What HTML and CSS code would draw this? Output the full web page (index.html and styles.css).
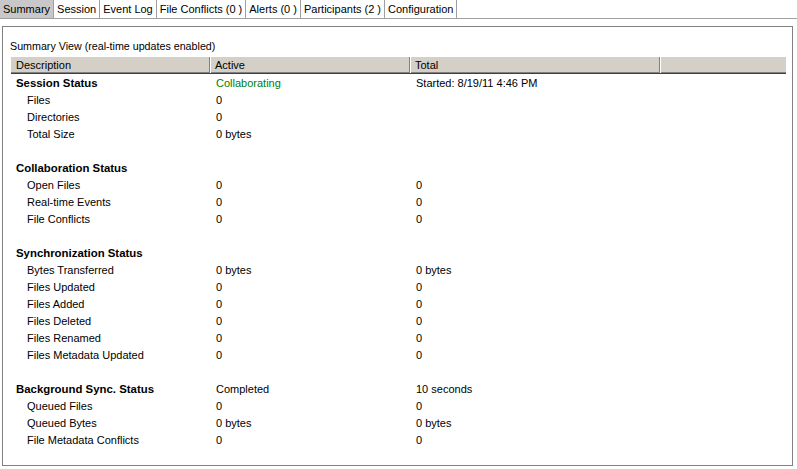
FILE: index.html
```html
<!DOCTYPE html>
<html>
<head>
<meta charset="utf-8">
<link rel="stylesheet" href="styles.css">
</head>
<body>
<div class="tabs">
  <div class="tab selected">Summary</div>
  <div class="tab">Session</div>
  <div class="tab">Event Log</div>
  <div class="tab">File Conflicts (0 )</div>
  <div class="tab">Alerts (0 )</div>
  <div class="tab">Participants (2 )</div>
  <div class="tab">Configuration</div>
</div>
<div class="panel">
  <div class="caption">Summary View (real-time updates enabled)</div>
  <div class="list">
    <div class="head">
      <div class="hcell">Description</div>
      <div class="hcell">Active</div>
      <div class="hcell">Total</div>
      <div class="hcell"></div>
    </div>
    <div class="row section"><div class="c1">Session Status</div><div class="c2 green">Collaborating</div><div class="c3">Started: 8/19/11 4:46 PM</div></div>
    <div class="row"><div class="c1">Files</div><div class="c2">0</div><div class="c3"></div></div>
    <div class="row"><div class="c1">Directories</div><div class="c2">0</div><div class="c3"></div></div>
    <div class="row"><div class="c1">Total Size</div><div class="c2">0 bytes</div><div class="c3"></div></div>
    <div class="row blank"></div>
    <div class="row section"><div class="c1">Collaboration Status</div><div class="c2"></div><div class="c3"></div></div>
    <div class="row"><div class="c1">Open Files</div><div class="c2">0</div><div class="c3">0</div></div>
    <div class="row"><div class="c1">Real-time Events</div><div class="c2">0</div><div class="c3">0</div></div>
    <div class="row"><div class="c1">File Conflicts</div><div class="c2">0</div><div class="c3">0</div></div>
    <div class="row blank"></div>
    <div class="row section"><div class="c1">Synchronization Status</div><div class="c2"></div><div class="c3"></div></div>
    <div class="row"><div class="c1">Bytes Transferred</div><div class="c2">0 bytes</div><div class="c3">0 bytes</div></div>
    <div class="row"><div class="c1">Files Updated</div><div class="c2">0</div><div class="c3">0</div></div>
    <div class="row"><div class="c1">Files Added</div><div class="c2">0</div><div class="c3">0</div></div>
    <div class="row"><div class="c1">Files Deleted</div><div class="c2">0</div><div class="c3">0</div></div>
    <div class="row"><div class="c1">Files Renamed</div><div class="c2">0</div><div class="c3">0</div></div>
    <div class="row"><div class="c1">Files Metadata Updated</div><div class="c2">0</div><div class="c3">0</div></div>
    <div class="row blank"></div>
    <div class="row section"><div class="c1">Background Sync. Status</div><div class="c2">Completed</div><div class="c3">10 seconds</div></div>
    <div class="row"><div class="c1">Queued Files</div><div class="c2">0</div><div class="c3">0</div></div>
    <div class="row"><div class="c1">Queued Bytes</div><div class="c2">0 bytes</div><div class="c3">0 bytes</div></div>
    <div class="row"><div class="c1">File Metadata Conflicts</div><div class="c2">0</div><div class="c3">0</div></div>
  </div>
</div>
</body>
</html>
```

FILE: styles.css
```css
html, body {
  margin: 0;
  padding: 0;
  background: #ffffff;
}
body {
  font-family: "Liberation Sans", Arial, sans-serif;
  font-size: 11px;
  color: #000;
  width: 797px;
  height: 469px;
  overflow: hidden;
}
.tabs {
  display: flex;
  height: 19px;
  border-bottom: 1px solid #a0a0a0;
  box-sizing: border-box;
}
.tab {
  height: 18px;
  line-height: 18px;
  padding: 0 3px 0 3px;
  border-right: 1px solid #a0a0a0;
  white-space: nowrap;
}
.tab.selected {
  background: #c8c8c8;
}
.panel {
  margin: 7px 4px 0 2px;
  height: 440px;
  box-sizing: border-box;
  border: 1px solid #808080;
  padding: 13px 6px 0 8px;
}
.caption {
  height: 13px;
  line-height: 13px;
  margin-left: -1px;
  margin-bottom: 4px;
  font-size: 10.7px;
}
.head {
  display: grid;
  grid-template-columns: 199px 200px 250px 1fr;
  height: 17px;
  background: #d4d0c8;
  border-bottom: 1px solid #404040;
  box-shadow: inset 0 -1px 0 #808080;
  box-sizing: border-box;
}
.hcell {
  line-height: 15px;
  padding-top: 1px;
  padding-left: 5px;
  border-right: 1px solid #808080;
  box-shadow: inset 1px 0 0 #ffffff;
}
.hcell:first-child {
  box-shadow: none;
}
.hcell:last-child {
  border-right: none;
}
.row {
  display: grid;
  grid-template-columns: 199px 200px 250px;
  height: 17px;
  line-height: 17px;
  padding-top: 1px;
  box-sizing: border-box;
  white-space: nowrap;
}
.c1 {
  padding-left: 16px;
}
.c2, .c3 {
  padding-left: 6px;
}
.section .c1 {
  padding-left: 5px;
  font-weight: bold;
  font-size: 11.4px;
}
.green {
  color: #008000;
}
```
